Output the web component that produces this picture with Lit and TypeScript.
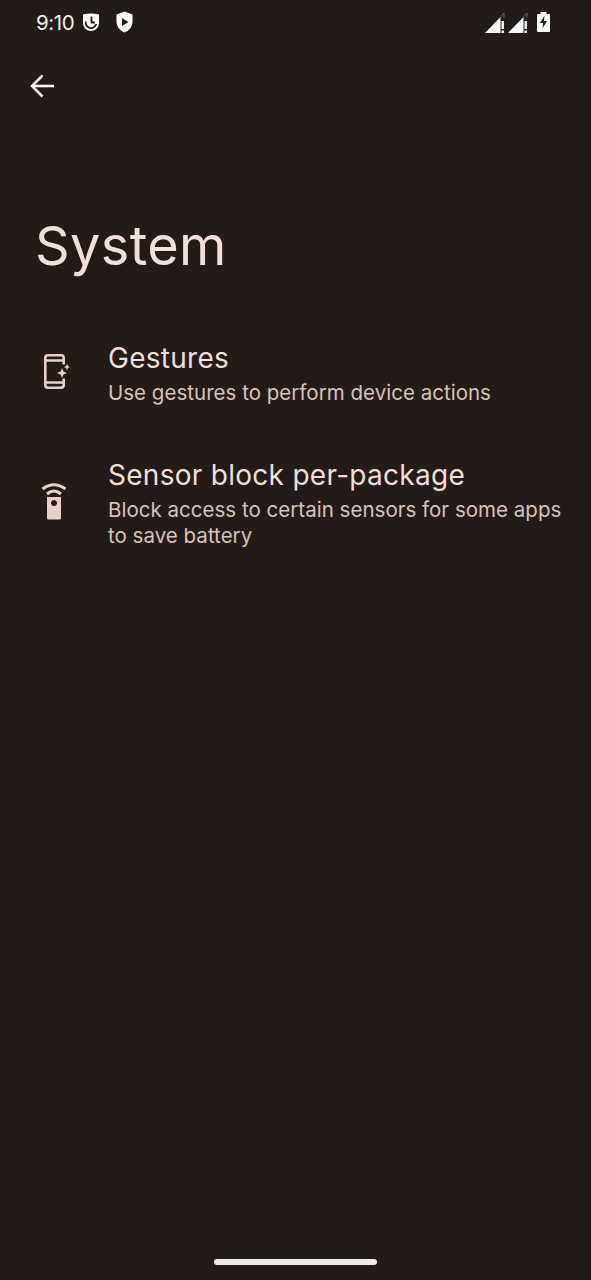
import { LitElement, html, css, svg } from "lit";
import { customElement } from "lit/decorators.js";

@customElement("app-root")
export class AppRoot extends LitElement {
  static styles = css`
    :host { display: block; }
    * { box-sizing: border-box; }
    .page {
      position: relative;
      height: 1280px;
      background: #231b18;
      font-family: Inter, "Noto Sans", sans-serif;
      color: #efdfd9;
      overflow: hidden;
    }
    .status {
      height: 44px;
      padding: 0 41px 0 36px;
      display: flex;
      align-items: center;
      color: #fff;
    }
    .time { font-size: 20.5px; letter-spacing: -0.4px; color: #f3efed; width: 46px; }
    .status svg { display: block; }
    .shield { margin-left: 16px; }
    .spacer { flex: 1; }
    .sig + .sig { margin-left: 2px; }
    .batt { margin-left: 8px; }
    .back { padding: 29px 0 0 29px; height: 64px; }
    .back svg { display: block; }
    h1 {
      margin: 106px 0 0 35px;
      font-size: 54px;
      line-height: 64px;
      font-weight: 400;
      letter-spacing: 0.4px;
      color: #f1e0da;
    }
    .list { margin-top: 61px; display: flex; flex-direction: column; gap: 50px; }
    .item { display: flex; align-items: center; padding-right: 28px; }
    .icon { width: 108px; padding-left: 40px; flex: none; margin-top: -3px; }
    .icon svg { display: block; }
    .title { font-size: 28px; line-height: 38px; color: #f0dfd9; letter-spacing: 0.28px; }
    .sub { margin-top: 3px; font-size: 20.5px; line-height: 26px; color: #d8c2bb; letter-spacing: 0.02px; }
    .home {
      position: absolute;
      left: 214px;
      top: 1259px;
      width: 163px;
      height: 6px;
      border-radius: 3px;
      background: #eeeaeb;
    }
  `;

  private signal() {
    return svg`<svg class="sig" width="21" height="21" viewBox="0 0 21 21">
      <path d="M0 21 L15.5 5 V21 Z" fill="#fff"/>
      <path d="M15.5 5 L19 1 V6" stroke="#6a6462" stroke-width="1" fill="none"/>
      <rect x="16.5" y="9" width="2.4" height="8" fill="#fff"/>
      <rect x="16.5" y="18.5" width="2.4" height="2.5" fill="#fff"/>
    </svg>`;
  }

  render() {
    return html`<div class="page">
      <div class="status">
        <span class="time">9:10</span>
        <svg width="18" height="18" viewBox="0 0 18 18">
          <path d="M1 1.5 Q9 -0.5 17 1.5 V10 A8 8 0 0 1 1 10 Z" fill="#fff"/>
          <path d="M9.5 3.5 V9.5 H13" stroke="#231b18" stroke-width="1.8" fill="none"/>
          <path d="M3.8 8.5 A5.3 5.3 0 0 0 14.2 11" stroke="#231b18" stroke-width="1.8" fill="none"/>
        </svg>
        <svg class="shield" width="17" height="22" viewBox="0 0 17 22">
          <path d="M8.5 .5 L16.5 3.5 V10.5 C16.5 15.5 13 20 8.5 21.5 C4 20 .5 15.5 .5 10.5 V3.5 Z" fill="#fff"/>
          <path d="M6 7 L12.5 11 L6 15 Z" fill="#231b18"/>
        </svg>
        <span class="spacer"></span>
        ${this.signal()}${this.signal()}
        <svg class="batt" width="13" height="20" viewBox="0 0 13 20">
          <path d="M3.5 0 H9.5 V2 H12 Q13 2 13 3 V19 Q13 20 12 20 H1 Q0 20 0 19 V3 Q0 2 1 2 H3.5 Z" fill="#fff"/>
          <path d="M7.5 3.5 L3 11 H6 L5.5 16.5 L10 9 H7 Z" fill="#231b18"/>
        </svg>
      </div>
      <div class="back">
        <svg width="26" height="26" viewBox="0 0 26 26" fill="none" stroke="#f6f2f0" stroke-width="2.6">
          <path d="M25 13 H3"/><path d="M13.5 2.5 L3 13 L13.5 23.5"/>
        </svg>
      </div>
      <h1>System</h1>
      <div class="list">
        <div class="item">
          <div class="icon">
            <svg width="30" height="38" viewBox="40 352 30 38" fill="none">
              <path d="M63.7 364.5 V358 Q63.7 355.3 61 355.3 H48 Q45.3 355.3 45.3 358 V385 Q45.3 387.7 48 387.7 H61 Q63.7 387.7 63.7 385 V378.5" stroke="#e6d0c9" stroke-width="2.6"/>
              <path d="M45 360.5 H64 M45 382.5 H64" stroke="#e6d0c9" stroke-width="2.6"/>
              <path d="M62 368 L63.4 371.6 L67 373 L63.4 374.4 L62 378 L60.6 374.4 L57 373 L60.6 371.6 Z" fill="#e6d0c9"/>
              <path d="M67 363.5 L67.9 366.1 L70 367 L67.9 367.9 L67 370.5 L66.1 367.9 L64 367 L66.1 366.1 Z" fill="#e6d0c9"/>
            </svg>
          </div>
          <div>
            <div class="title">Gestures</div>
            <div class="sub">Use gestures to perform device actions</div>
          </div>
        </div>
        <div class="item">
          <div class="icon">
            <svg width="30" height="38" viewBox="40 482 30 38" fill="none">
              <path d="M47 497 H61 V518 Q61 519.5 59.5 519.5 H48.5 Q47 519.5 47 518 Z M54 500 a3 3 0 1 0 .01 0 Z" fill="#e6d0c9" fill-rule="evenodd"/>
              <path d="M42.5 489 Q54 480.5 65.5 489" stroke="#e6d0c9" stroke-width="3"/>
              <path d="M47 494 Q54 488 61 494" stroke="#e6d0c9" stroke-width="3"/>
            </svg>
          </div>
          <div>
            <div class="title">Sensor block per-package</div>
            <div class="sub">Block access to certain sensors for some apps to save battery</div>
          </div>
        </div>
      </div>
      <div class="home"></div>
    </div>`;
  }
}
